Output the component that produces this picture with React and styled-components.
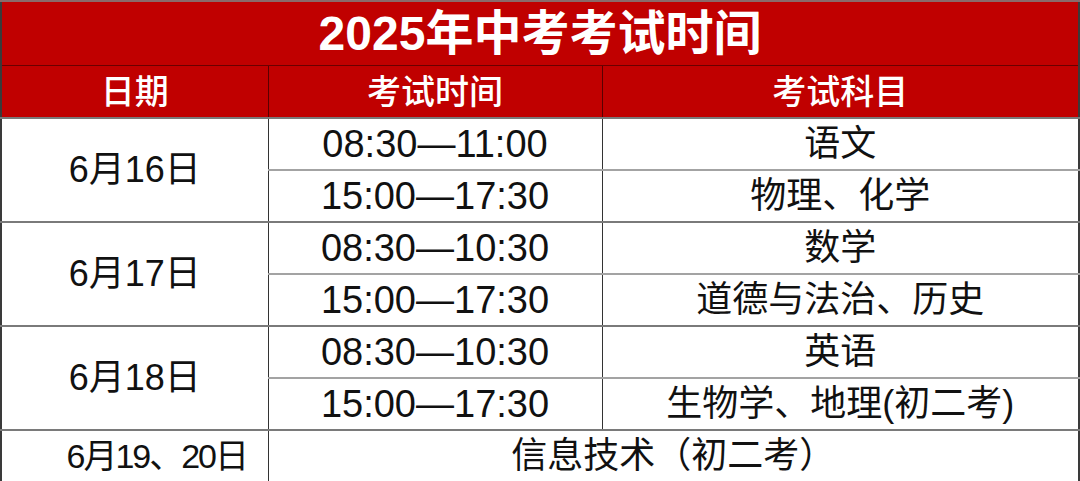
import React from "react";
import styled, { createGlobalStyle } from "styled-components";

const Global = createGlobalStyle`
  html, body { margin: 0; padding: 0; background: #ffffff; }
  body { font-family: "Liberation Sans", "Noto Sans CJK SC", sans-serif; }
`;

const Table = styled.table`
  width: 1080px;
  height: 481px;
  border-collapse: collapse;
  table-layout: fixed;
  border-left: 2px solid #3a3a3a;
  border-right: 2px solid #3a3a3a;
  border-bottom: 2px solid #3a3a3a;
`;

const TitleCell = styled.th`
  height: 63px;
  padding: 0;
  background: #c00000;
  color: #ffffff;
  font-size: 48px;
  font-weight: 600;
  text-align: center;
  vertical-align: middle;
  border-top: 2px solid #8a6a6a;
  border-bottom: 1px solid #6a0000;
  line-height: 1;
`;

const HeadCell = styled.th`
  height: 51px;
  padding: 0;
  background: #c00000;
  color: #ffffff;
  font-size: 34px;
  font-weight: 500;
  text-align: center;
  vertical-align: middle;
  border-right: 1px solid #5a0000;
  line-height: 1;
  &:last-child { border-right: none; }
`;

const Cell = styled.td`
  height: 50px;
  padding: 0 0 0 ${(p) => p.$shift || 0}px;
  color: #111111;
  font-size: ${(p) => p.$size || 36}px;
  letter-spacing: ${(p) => p.$tight || 0}px;
  font-weight: 400;
  text-align: center;
  vertical-align: middle;
  line-height: 1;
  white-space: nowrap;
  border-right: 1px solid #333333;
  border-top: 2px solid ${(p) => (p.$strong ? "#7a7a7a" : "#a3a3a3")};
  &:last-child { border-right: none; }
`;

const groups = [
  {
    date: "6月16日",
    rows: [
      ["08:30—11:00", "语文"],
      ["15:00—17:30", "物理、化学"],
    ],
  },
  {
    date: "6月17日",
    rows: [
      ["08:30—10:30", "数学"],
      ["15:00—17:30", "道德与法治、历史"],
    ],
  },
  {
    date: "6月18日",
    rows: [
      ["08:30—10:30", "英语"],
      ["15:00—17:30", "生物学、地理(初二考)"],
    ],
  },
];

export default function App() {
  return (
    <>
      <Global />
      <Table>
        <colgroup>
          <col style={{ width: 267 }} />
          <col style={{ width: 334 }} />
          <col />
        </colgroup>
        <thead>
          <tr>
            <TitleCell colSpan={3}>2025年中考考试时间</TitleCell>
          </tr>
          <tr>
            <HeadCell>日期</HeadCell>
            <HeadCell>考试时间</HeadCell>
            <HeadCell>考试科目</HeadCell>
          </tr>
        </thead>
        <tbody>
          {groups.map((g) =>
            g.rows.map((r, i) => (
              <tr key={g.date + i}>
                {i === 0 && (
                  <Cell rowSpan={2} $strong>
                    {g.date}
                  </Cell>
                )}
                <Cell $strong={i === 0} $size={38}>
                  {r[0]}
                </Cell>
                <Cell $strong={i === 0}>{r[1]}</Cell>
              </tr>
            ))
          )}
          <tr>
            <Cell $strong $shift={44} $size={34} $tight={-2}>
              6月19、20日
            </Cell>
            <Cell colSpan={2} $strong>
              信息技术（初二考）
            </Cell>
          </tr>
        </tbody>
      </Table>
    </>
  );
}
